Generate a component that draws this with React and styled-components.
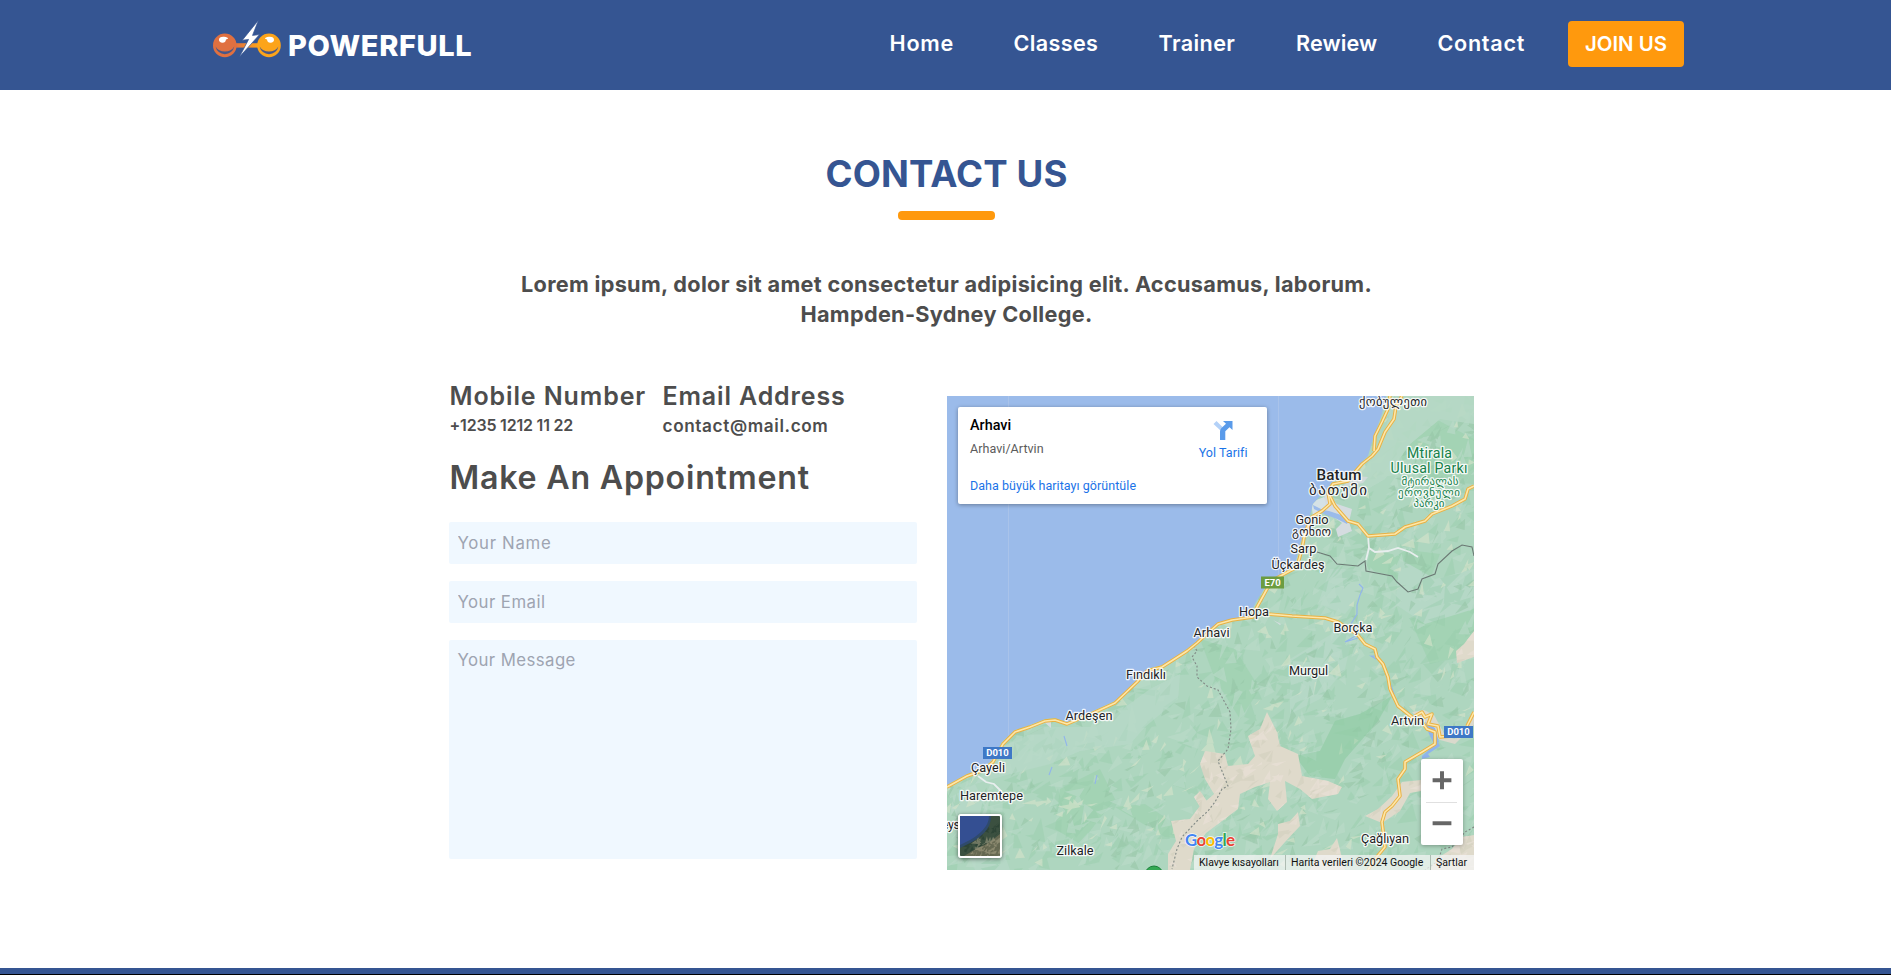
import React from "react";
import styled, { createGlobalStyle } from "styled-components";

const GlobalStyle = createGlobalStyle`
  *, *::before, *::after { box-sizing: border-box; }
  html, body { margin: 0; padding: 0; }
  body {
    background: #fff;
    color: #4d4d4d;
    font-family: "Inter", "Noto Sans", sans-serif;
    overflow: hidden;
  }
  h1, h2, h3, p { margin: 0; }
`;

const Page = styled.div`
  display: flex;
  flex-direction: column;
  height: 975px;
`;

/* ---------- header ---------- */

const Header = styled.header`
  display: flex;
  justify-content: space-between;
  flex: none;
  height: 90px;
  padding: 0 207px 0 212px;
  background: #355592;
`;

const Brand = styled.a`
  display: flex;
  align-items: flex-start;
  padding-top: 19px;
  color: #fff;
`;

const BrandName = styled.span`
  margin: 9px 0 0 4px;
  font-size: 29px;
  line-height: 36px;
  font-weight: 800;
  letter-spacing: 0.62px;
`;

const Nav = styled.nav`
  display: flex;
  align-items: flex-start;
  padding-top: 21px;
`;

const NavLink = styled.a`
  width: ${(p) => p.$width}px;
  padding-left: 0.5px;
  color: #fff;
  font-size: 21.6px;
  line-height: 45px;
  font-weight: 600;
  letter-spacing: ${(p) => p.$track}px;
  white-space: nowrap;
`;

const JoinButton = styled.button`
  width: 116px;
  height: 46px;
  padding: 0 0 1px;
  border: 0;
  border-radius: 4px;
  background: #ff990d;
  color: #fff;
  font: 600 20.4px/45px "Inter", sans-serif;
`;

/* ---------- intro ---------- */

const Main = styled.main`
  display: flex;
  flex-direction: column;
  align-items: center;
  flex: 1;
  padding-top: 62px;
`;

const Title = styled.h1`
  color: #355592;
  font-size: 36.6px;
  line-height: 44px;
  font-weight: 700;
  letter-spacing: 0.1px;
  padding-left: 2px;
`;

const Underline = styled.div`
  width: 97px;
  height: 9px;
  margin: 15px 0 49px 2px;
  border-radius: 4px;
  background: #ff990d;
`;

const Lead = styled.p`
  font-size: 21.7px;
  line-height: 30px;
  font-weight: 700;
  letter-spacing: 0.3px;
  text-align: center;
  padding-left: 2px;
`;

/* ---------- contact columns ---------- */

const Columns = styled.section`
  display: flex;
  align-items: flex-start;
  gap: 30px;
  width: 1025px;
  margin: 50px 0 0 31px;
`;

const FormColumn = styled.div`
  display: flex;
  flex-direction: column;
  width: 468px;
  padding-top: 2px;
`;

const Details = styled.div`
  display: flex;
  padding-left: 1px;
`;

const Detail = styled.div`
  width: 213px;
`;

const DetailTitle = styled.h3`
  font-size: 25px;
  line-height: 30px;
  font-weight: 600;
  letter-spacing: ${(p) => p.$track}px;
  white-space: nowrap;
`;

const DetailValue = styled.p`
  font-size: ${(p) => p.$size}px;
  line-height: 29px;
  font-weight: 600;
  letter-spacing: ${(p) => p.$track}px;
  white-space: nowrap;
`;

const FormTitle = styled.h2`
  margin: 19px 0 25px;
  padding-left: 1px;
  font-size: 32.2px;
  line-height: 38px;
  font-weight: 600;
  letter-spacing: 0.76px;
`;

const fieldStyle = `
  display: block;
  width: 100%;
  border: 0;
  border-radius: 2px;
  background: #f0f8ff;
  padding: 8px 9px;
  font: 400 16.8px/24px "Inter", sans-serif;
  outline: none;
  resize: none;
  &::placeholder { color: #9ea4b1; opacity: 1; }
`;

const Field = styled.input`
  ${fieldStyle}
  height: 42px;
  margin-bottom: 17px;
  letter-spacing: ${(p) => p.$track}px;
`;

const MessageField = styled.textarea`
  ${fieldStyle}
  height: 219px;
  letter-spacing: 0.42px;
`;

/* ---------- map ---------- */

const MapFrame = styled.div`
  position: relative;
  width: 527px;
  height: 474px;
  margin-top: 17px;
  overflow: hidden;
  background: #9bbbea;
  font-family: "Roboto", sans-serif;
`;

const MapCanvas = styled.svg`
  display: block;
`;

const PlaceCard = styled.div`
  position: absolute;
  left: 11px;
  top: 11px;
  display: flex;
  justify-content: space-between;
  width: 309px;
  height: 97px;
  padding: 10px 19px 0 12.5px;
  border-radius: 2px;
  background: #fff;
  box-shadow: 0 1px 4px rgba(0, 0, 0, 0.35);
`;

const PlaceName = styled.div`
  color: #000;
  font-size: 14.4px;
  line-height: 18px;
  font-weight: 500;
`;

const PlaceAddress = styled.div`
  margin-top: 6px;
  color: #5b5b5b;
  font-size: 12.5px;
  line-height: 16px;
  letter-spacing: 0.05px;
`;

const CardLink = styled.a`
  display: block;
  margin-top: ${(p) => p.$gap}px;
  color: #1a73e8;
  font-size: 12.5px;
  line-height: 16px;
  letter-spacing: 0.05px;
  white-space: nowrap;
`;

const Directions = styled.div`
  display: flex;
  flex-direction: column;
  align-items: center;
  padding-top: 3px;
`;

const SatelliteToggle = styled.div`
  position: absolute;
  left: 11px;
  top: 418px;
  width: 44px;
  height: 44px;
  border: 2px solid #fff;
  border-radius: 3px;
  overflow: hidden;
  box-shadow: 0 1px 4px rgba(0, 0, 0, 0.5);
`;

const ZoomControl = styled.div`
  position: absolute;
  left: 474px;
  top: 363px;
  display: flex;
  flex-direction: column;
  align-items: center;
  width: 42px;
  height: 86px;
  border-radius: 2px;
  background: #fff;
  box-shadow: 0 1px 4px rgba(0, 0, 0, 0.3);
`;

const ZoomDivider = styled.div`
  width: 31px;
  height: 1px;
  background: #e0e0e0;
`;

const Attribution = styled.div`
  position: absolute;
  right: 0;
  bottom: 0;
  display: flex;
  height: 15px;
`;

const Credit = styled.span`
  width: ${(p) => p.$width}px;
  padding-left: 5.5px;
  border-left: ${(p) => (p.$divided ? "1px solid rgba(160,175,165,.8)" : "0")};
  background: rgba(245, 245, 245, 0.72);
  color: #111;
  font-size: 10.5px;
  line-height: 15px;
  white-space: nowrap;
`;

const Footer = styled.footer`
  flex: none;
  height: 7px;
  background: #355592;
  border-bottom: 1px solid #000;
`;

/* ---------- drawings ---------- */

function Logo() {
  return (
    <svg width="72" height="42" viewBox="212 19 72 42">
      <defs>
        <linearGradient id="bar" x1="0" x2="1">
          <stop offset="0" stopColor="#e07040" />
          <stop offset="1" stopColor="#fca41a" />
        </linearGradient>
      </defs>
      <path d="M235 43.2H259V47.6H235z" fill="url(#bar)" />
      <circle cx="224.8" cy="45.4" r="11.8" fill="#e07040" />
      <circle cx="269" cy="45.4" r="11.8" fill="#fca41a" />
      <path d="M215.5 46.5a9.6 9.6 0 0 0 18.8 0a10.5 9 0 0 1-18.8 0z" fill="#47578a" />
      <path d="M259.6 46.5a9.6 9.6 0 0 0 18.8 0a10.5 9 0 0 1-18.8 0z" fill="#47578a" />
      <path d="M219 40q0-3.5 5-3.2q4 .4 4 2l-2 .7q-.5 3.3-3.5 3.2q-3.5-.3-3.5-2.7z" fill="#fff" />
      <path d="M274 40q0-3.5-5-3.2q-4 .4-4 2l2 .7q.5 3.3 3.5 3.2q3.5-.3 3.5-2.7z" fill="#fff" />
      <path
        d="M258.6 20L242.3 40.2L248.6 39.4L239.4 57L259.5 34.6L252.5 35.4Z"
        fill="#fff"
        stroke="#355592"
        strokeWidth="0.7"
      />
    </svg>
  );
}

const COAST =
  "1386,397 1382,415 1373,440 1368,457 1362,463 1355,473 1332,483 1326,491 1313,505 1311,513 1305,533 1299,547 1296,563 1283,575 1272,580 1264,590 1256,603 1249,617 1235,620 1222,623 1210,631 1197,642 1187,650 1173,660 1162,666 1147,670 1137,682 1115,702 1093,712 1067,723 1055,719 1045,720 1030,726 1015,731 1002,743 992,761 983,769 967,775 947,786";

const ROADS = [
  "1402,397 1396,407 1394,420 1385,433 1378,450 1372,457 1362,465 1355,473 1348,482 1333,485 1328,493 1330,505 1322,512 1312,518 1305,533 1302,550 1297,568 1275,580 1267,590 1257,608 1253,618 1232,621 1218,625 1209,633 1197,644 1187,652 1173,661 1162,668 1147,672 1137,683 1115,704 1093,714 1067,725 1055,721 1045,722 1030,728 1015,733 1003,745 993,763 984,771 967,777 947,788",
  "1390,397 1388,410 1382,423 1375,437 1374,452",
  "1328,493 1335,507 1348,522 1358,525 1368,537 1395,535 1405,528 1425,522 1432,515 1452,507 1465,500 1468,490 1474,487",
  "1268,615 1292,617 1325,619 1338,623 1352,632 1357,635 1365,645 1375,650 1377,658 1383,665 1388,678 1390,690 1398,707 1412,718 1422,723 1427,730 1435,733 1435,745 1422,753 1405,763 1405,770 1398,780 1400,797 1392,807 1385,813 1382,823 1385,848 1375,860 1368,871",
  "1415,717 1422,713 1425,718 1432,715 1428,725 1438,727 1440,738 1452,737",
  "1467,727 1474,713",
];

const LIGHT_AREAS = [
  "1395,397 1474,397 1474,425 1440,420 1410,445 1385,480 1350,500 1360,475 1380,450",
  "1003,748 1045,728 1095,728 1120,712 1150,690 1180,675 1178,700 1145,728 1130,745 1080,752 1050,765 1010,775 975,785",
  "1290,660 1340,630 1352,640 1345,670 1320,700 1290,715",
  "1330,570 1355,570 1365,590 1345,615 1318,605",
  "947,800 975,785 990,815 1010,871 975,871",
  "1400,560 1435,580 1474,570 1474,610 1425,625 1395,605",
];

const DARK_AREAS = [
  "1295,757 1320,752 1335,722 1360,715 1392,697 1378,722 1345,760 1335,780 1310,777",
  "1370,553 1400,550 1440,555 1432,575 1408,591 1392,577 1366,570",
  "1115,808 1145,805 1175,825 1185,840 1165,838 1135,820",
  "1390,420 1420,412 1474,440 1474,470 1440,490 1405,470",
  "1200,640 1235,650 1260,690 1240,720 1215,680",
  "1410,620 1474,600 1474,655 1430,665",
  "1060,790 1100,770 1115,800 1080,845 1055,830",
];

const SAND_AREAS = [
  "1267,713 1277,733 1280,747 1298,755 1302,777 1328,782 1342,788 1338,795 1322,798 1312,800 1300,790 1285,782 1287,803 1277,812 1268,800 1270,783 1255,788 1240,795 1238,810 1222,822 1206,834 1194,850 1190,871 1168,871 1168,855 1176,842 1171,822 1190,820 1200,807 1214,795 1205,780 1200,765 1205,752 1225,755 1228,767 1248,765 1255,757 1248,737 1260,730",
  "1298,813 1300,827 1285,843 1270,860 1278,835 1278,825 1290,822",
  "1337,839 1330,850 1318,852 1310,871 1345,871",
  "1474,632 1464,645 1456,652 1457,664 1474,658",
  "1421,781 1402,783 1392,797 1378,810 1365,817 1382,824 1400,812 1410,794 1421,792",
  "1436,860 1452,850 1462,838 1474,836 1474,871 1430,871",
  "1200,792 1207,802 1200,808 1194,798",
];

function seeded(seed) {
  let s = seed;
  return () => {
    s = (s * 1664525 + 1013904223) % 4294967296;
    return s / 4294967296;
  };
}

function makeFacets(count, seed, x0, y0, w, h, size) {
  const rnd = seeded(seed);
  const shapes = [];
  for (let i = 0; i < count; i += 1) {
    const x = x0 + rnd() * w;
    const y = y0 + rnd() * h;
    const tilt = -1.5 + rnd() * 1.4;
    const len = size * (0.5 + rnd());
    const thick = size * (0.2 + rnd() * 0.45);
    const dx = Math.cos(tilt) * len;
    const dy = Math.sin(tilt) * len;
    const bx = dx * rnd() - Math.sin(tilt) * thick;
    const by = dy * rnd() + Math.cos(tilt) * thick;
    shapes.push(
      `M${x.toFixed(1)} ${y.toFixed(1)}l${dx.toFixed(1)} ${dy.toFixed(1)}L${(x + bx).toFixed(1)} ${(y + by).toFixed(1)}z`
    );
  }
  return shapes.join("");
}

const SHADE = makeFacets(900, 7, 940, 390, 540, 480, 17);
const GLOW = makeFacets(850, 21, 940, 390, 540, 480, 15);
const DEEP = makeFacets(480, 311, 940, 390, 540, 480, 12);
const GLINT = makeFacets(400, 99, 940, 390, 540, 480, 11);
const SAND_LIGHT = makeFacets(420, 45, 1160, 620, 320, 250, 12);
const SAND_DARK = makeFacets(300, 61, 1160, 620, 320, 250, 12);

const LABELS = [
  { t: "ქობულეთი", x: 1393, y: 407, w: 68, s: 12.5 },
  { t: "Mtirala", x: 1429.5, y: 459, w: 45, s: 14.2, c: "#17804a" },
  { t: "Ulusal Parkı", x: 1429, y: 473.7, w: 77, s: 14.2, c: "#17804a" },
  { t: "მტირალას", x: 1430, y: 485.5, w: 57, s: 11, c: "#17804a" },
  { t: "ეროვნული", x: 1429, y: 497, w: 62, s: 11, c: "#17804a" },
  { t: "პარკი", x: 1429, y: 508, w: 31, s: 11, c: "#17804a" },
  { t: "Batum", x: 1339, y: 480.7, w: 45, s: 15.2, b: 500 },
  { t: "ბათუმი", x: 1338, y: 496, w: 58, s: 15 },
  { t: "Gonio", x: 1312, y: 525, w: 33 },
  { t: "გონიო", x: 1311.5, y: 537, w: 39, s: 12 },
  { t: "Sarp", x: 1303.5, y: 554, w: 26 },
  { t: "Üçkardeş", x: 1298, y: 570, w: 53 },
  { t: "Hopa", x: 1254, y: 617, w: 30 },
  { t: "Arhavi", x: 1211.5, y: 638, w: 36 },
  { t: "Borçka", x: 1353, y: 633, w: 39 },
  { t: "Fındıklı", x: 1146, y: 680.3, w: 40 },
  { t: "Ardeşen", x: 1089, y: 720.5, w: 47 },
  { t: "Çayeli", x: 988, y: 772.5, w: 34 },
  { t: "Haremtepe", x: 991.5, y: 801, w: 63 },
  { t: "eys", x: 951, y: 830, w: 18 },
  { t: "Zilkale", x: 1075, y: 856, w: 37 },
  { t: "Murgul", x: 1308.5, y: 676, w: 39 },
  { t: "Artvin", x: 1407.5, y: 726, w: 33 },
  { t: "Çağlıyan", x: 1385, y: 843.5, w: 48 },
];

const SHIELDS = [
  { t: "E70", x: 1261, y: 577.5, w: 23, c: "#6c9c40" },
  { t: "D010", x: 983, y: 748, w: 29, c: "#3e78c6" },
  { t: "D010", x: 1444, y: 727, w: 29, c: "#3e78c6" },
];

const GOOGLE = [
  ["G", "#4285f4"],
  ["o", "#ea4335"],
  ["o", "#fbbc04"],
  ["g", "#4285f4"],
  ["l", "#34a853"],
  ["e", "#ea4335"],
];

function MapDrawing() {
  return (
    <MapCanvas width="527" height="474" viewBox="947 397 527 474">
      <defs>
        <clipPath id="land">
          <polygon points={`${COAST} 947,871 1474,871 1474,397`} />
        </clipPath>
        <clipPath id="sand">
          {SAND_AREAS.map((p) => (
            <polygon key={p} points={p} />
          ))}
        </clipPath>
      </defs>
      <rect x="947" y="397" width="527" height="474" fill="#9bbbea" />
      <path d="M1008.5 397V871M1278.5 397V871" stroke="#a9c3ea" strokeWidth="1" />
      <g clipPath="url(#land)">
        <rect x="947" y="397" width="527" height="474" fill="#aed6bf" />
        {DARK_AREAS.map((p) => (
          <polygon key={p} points={p} fill="#9bd0ad" opacity="0.6" />
        ))}
        {LIGHT_AREAS.map((p) => (
          <polygon key={p} points={p} fill="#b5d8c6" />
        ))}
        <path d={SHADE} fill="#96cdaa" opacity="0.4" />
        <path d={GLOW} fill="#bbdbca" opacity="0.6" />
        <path d={DEEP} fill="#93c4a4" opacity="0.5" />
        <path d={GLINT} fill="#d2e2ca" opacity="0.65" />
        <polygon points={LIGHT_AREAS[0]} fill="#b5d8c4" opacity="0.85" />
        <polygon points={LIGHT_AREAS[1]} fill="#b5d8c6" opacity="0.6" />
        <polygon points={DARK_AREAS[0]} fill="#8ccba2" opacity="0.4" />
        <g clipPath="url(#sand)">
          <rect x="1160" y="620" width="320" height="252" fill="#dfdacb" />
          <path d={SAND_DARK} fill="#cfcdbb" opacity="0.45" />
          <path d={SAND_LIGHT} fill="#e8e0d5" opacity="0.7" />
        </g>
        <polygon points="1325,495 1337,505 1352,510 1349,523 1352,532 1338,538 1336,530 1342,524 1322,510" fill="#d5dce0" />
        <polygon points="1311,503 1324,498 1327,511 1313,517" fill="#d5e2e6" />
        <path d="M1313 506l10 5 6 1 12 4 7 6-1 3-10-5-13-5-10-5z" fill="#9bbbea" />
        <polygon points="1355,477 1368,478 1363,484 1340,489" fill="#ced9d9" />
        <polygon points="1412,713 1424,711 1434,716 1446,738 1456,740 1474,716 1474,726 1455,745 1440,741 1425,728" fill="#dad9cc" />
        <path d="M1425 723l10 6 4 14-5 2-5-10zM1422 757l16-14 2 4-12 8 2 3-8 2z" fill="#8fb4ec" />
        <path d="M1345 643l12-7 1 3zM1371 657l7 0-2 3zM1359 585l4 4-3 7M1360 596l-3 10 0 9-6 10M1064 737l3 10M1052 768l-3 8M1097 776l-2 9M1391 686l3 9" fill="none" stroke="#91b5ec" strokeWidth="1.1" />
        <path d="M1368 537l1 12 6 4 13-1 10-3 12 4 8 5M1369 549l-3 12M978 777l8 6 8 2 8 8" fill="none" stroke="#e8eeee" strokeWidth="1.8" />
        <path d="M1044 723l7 0 0 6zM1273 621l8 4-1 1z" fill="#d5dde0" />
        <polyline
          points="1317,553 1330,557 1337,565 1358,567 1365,562 1366,572 1392,577 1397,583 1408,593 1418,590 1422,580 1435,575 1438,565 1452,552 1462,546 1472,548 1474,557"
          fill="none"
          stroke="#6b7974"
          strokeWidth="1.1"
        />
        <path
          d="M1192 643L1197 652L1192 658L1197 667L1197 678L1207 687L1218 691L1230 713L1231 730L1228 750L1218 762L1228 787L1222 790L1215 803L1208 812L1197 822L1182 838L1177 850L1172 870M1474 828L1465 833L1452 848L1442 850L1438 862L1425 871"
          fill="none"
          stroke="#808985"
          strokeWidth="1.1"
          strokeDasharray="2 2"
        />
      </g>
      <circle cx="1154" cy="876" r="9" fill="#34a853" stroke="#188038" />
      {ROADS.map((p) => (
        <polyline key={p} points={p} fill="none" stroke="#e9b143" strokeWidth="3.5" strokeLinejoin="round" />
      ))}
      {ROADS.map((p) => (
        <polyline key={p} points={p} fill="none" stroke="#fde7a9" strokeWidth="1.6" strokeLinejoin="round" />
      ))}
      {SHIELDS.map((s) => (
        <g key={`${s.t}${s.x}`}>
          <rect x={s.x} y={s.y} width={s.w} height="12" fill={s.c} />
          <text x={s.x + s.w / 2} y={s.y + 9.3} textAnchor="middle" fontSize="9.5" fontWeight="700" fill="#fff">
            {s.t}
          </text>
        </g>
      ))}
      {LABELS.map((l) => (
        <text
          key={l.t}
          x={l.x - l.w / 2}
          y={l.y}
          textLength={l.w}
          fontSize={l.s || 12.8}
          fontWeight={l.b || 400}
          fontFamily='Roboto, "DejaVu Sans", sans-serif'
          fill={l.c || "#1f2427"}
          stroke="#fff"
          strokeOpacity="0.85"
          strokeWidth="2.6"
          strokeLinejoin="round"
          paintOrder="stroke"
        >
          {l.t}
        </text>
      ))}
      <text x="1185" y="847" textLength="50" fontFamily="Lato, sans-serif" fontSize="17" fontWeight="700" stroke="#fff" strokeOpacity="0.8" strokeWidth="1.5" paintOrder="stroke">
        {GOOGLE.map(([ch, color], i) => (
          <tspan key={i} fill={color}>
            {ch}
          </tspan>
        ))}
      </text>
    </MapCanvas>
  );
}

function DirectionsIcon() {
  return (
    <svg width="20" height="20" viewBox="0 0 20 20">
      <path d="M0.5 4L3.5 1L10 7.5L8 11z" fill="#b3d1f8" />
      <path d="M7 20V11.5Q7 9.5 8.5 8L13 3.8L10 1H19.5V10L16.5 7.2L12.3 11.3V20z" fill="#5a9bea" />
    </svg>
  );
}

const SAT_DARK = makeFacets(90, 5, 0, 0, 40, 40, 6);
const SAT_LIGHT = makeFacets(70, 13, 10, 24, 32, 18, 5);

function SatelliteThumb() {
  return (
    <svg width="40" height="40" viewBox="0 0 40 40">
      <rect width="40" height="40" fill="#3b5040" />
      <path d={SAT_DARK} fill="#20382c" opacity="0.5" />
      <path d="M40 18L30 26L16 33L4 40H40z" fill="#77735a" opacity="0.75" />
      <path d={SAT_LIGHT} fill="#b0a88c" opacity="0.5" />
      <path d="M0 0H31Q31 10 24 17T8 28L0 32z" fill="#2f4a6c" />
      <path d="M0 0H29Q29 8 22 15T6 26L0 29z" fill="#344f92" />
    </svg>
  );
}

function ZoomGlyph({ plus }) {
  return (
    <svg width="42" height="43" viewBox="0 0 42 43">
      <path d={plus ? "M11.5 21.5H30.5M21 12.5V30.5" : "M11.5 21.5H30.5"} stroke="#666" strokeWidth="4" />
    </svg>
  );
}

const NAV = [
  { label: "Home", width: 124, track: 0.8 },
  { label: "Classes", width: 145, track: 0.35 },
  { label: "Trainer", width: 137.5, track: 0.4 },
  { label: "Rewiew", width: 141.5, track: 0.1 },
  { label: "Contact", width: 131, track: 0.7 },
];

export default function App() {
  return (
    <Page>
      <GlobalStyle />
      <Header>
        <Brand>
          <Logo />
          <BrandName>POWERFULL</BrandName>
        </Brand>
        <Nav>
          {NAV.map((n) => (
            <NavLink key={n.label} $width={n.width} $track={n.track}>
              {n.label}
            </NavLink>
          ))}
          <JoinButton>JOIN US</JoinButton>
        </Nav>
      </Header>
      <Main>
        <Title>CONTACT US</Title>
        <Underline />
        <Lead>
          Lorem ipsum, dolor sit amet consectetur adipisicing elit. Accusamus, laborum.
          <br />
          Hampden-Sydney College.
        </Lead>
        <Columns>
          <FormColumn>
            <Details>
              <Detail>
                <DetailTitle $track={0.88}>Mobile Number</DetailTitle>
                <DetailValue $size={16} $track={-0.2}>+1235 1212 11 22</DetailValue>
              </Detail>
              <Detail>
                <DetailTitle $track={0.85}>Email Address</DetailTitle>
                <DetailValue $size={17.2} $track={0.62}>contact@mail.com</DetailValue>
              </Detail>
            </Details>
            <FormTitle>Make An Appointment</FormTitle>
            <Field $track={0.7} placeholder="Your Name" />
            <Field $track={0.45} placeholder="Your Email" />
            <MessageField placeholder="Your Message" />
          </FormColumn>
          <MapFrame>
            <MapDrawing />
            <PlaceCard>
              <div>
                <PlaceName>Arhavi</PlaceName>
                <PlaceAddress>Arhavi/Artvin</PlaceAddress>
                <CardLink $gap={21}>Daha büyük haritayı görüntüle</CardLink>
              </div>
              <Directions>
                <DirectionsIcon />
                <CardLink $gap={5}>Yol Tarifi</CardLink>
              </Directions>
            </PlaceCard>
            <SatelliteToggle>
              <SatelliteThumb />
            </SatelliteToggle>
            <ZoomControl>
              <ZoomGlyph plus />
              <ZoomDivider />
              <ZoomGlyph />
            </ZoomControl>
            <Attribution>
              <Credit $width={91}>Klavye kısayolları</Credit>
              <Credit $width={145} $divided>Harita verileri ©2024 Google</Credit>
              <Credit $width={44} $divided>Şartlar</Credit>
            </Attribution>
          </MapFrame>
        </Columns>
      </Main>
      <Footer />
    </Page>
  );
}
